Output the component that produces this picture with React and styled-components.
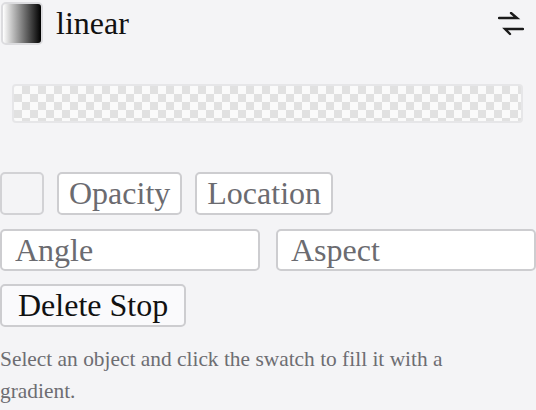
import React from 'react';
import styled, { createGlobalStyle } from 'styled-components';

const GlobalStyle = createGlobalStyle`
  html, body {
    margin: 0;
    padding: 0;
    background: #f4f4f6;
  }
  body {
    font-family: "Liberation Serif", "Times New Roman", serif;
  }
`;

const Panel = styled.div`
  width: 536px;
  padding-top: 2px;
  box-sizing: border-box;
`;

const Header = styled.div`
  display: flex;
  align-items: center;
  justify-content: space-between;
  padding: 0 12px 0 1px;
`;

const Title = styled.div`
  display: flex;
  align-items: center;
  gap: 13px;
  font-size: 32px;
  color: #111;
`;

const Swatch = styled.div`
  width: 42px;
  height: 43px;
  box-sizing: border-box;
  border: 2px solid #dcdcdf;
  border-radius: 5px;
  background: linear-gradient(to right, #fff, #000);
`;

const Preview = styled.div`
  margin: 39px 13px 0 12px;
  height: 39px;
  box-sizing: border-box;
  border: 2px solid #e6e6e8;
  border-radius: 4px;
  background-color: #fafafa;
  background-image: conic-gradient(#e1e1e1 25%, transparent 0 50%, #e1e1e1 0 75%, transparent 0);
  background-size: 16px 16px;
`;

const Row = styled.div`
  display: flex;
  gap: 13px;
  margin-top: ${(p) => p.$top}px;
`;

const Fields = styled.div`
  display: grid;
  grid-template-columns: 1fr 1fr;
  gap: 16px;
  margin-top: 14px;
`;

const StopColor = styled.div`
  width: 44px;
  height: 43px;
  box-sizing: border-box;
  border: 2px solid #d2d2d5;
  border-radius: 5px;
`;

const Button = styled.button`
  height: 43px;
  box-sizing: border-box;
  padding: 0 ${(p) => p.$pad || 10}px;
  border: 2px solid #cdcdd0;
  border-radius: 5px;
  background: ${(p) => (p.$dark ? '#fafafc' : '#fff')};
  font-family: "Liberation Serif", "Times New Roman", serif;
  font-size: 32px;
  color: ${(p) => (p.$dark ? '#111' : '#6b6b70')};
`;

const Field = styled.input`
  height: 42px;
  width: 100%;
  box-sizing: border-box;
  padding: 0 13px;
  border: 2px solid #cdcdd0;
  border-radius: 5px;
  background: #fff;
  font-family: "Liberation Serif", "Times New Roman", serif;
  font-size: 32px;
  color: #6b6b70;
  outline: none;

  &::placeholder {
    color: #6b6b70;
  }
`;

const Hint = styled.p`
  margin: 16px 0 0;
  max-width: 470px;
  font-size: 21.4px;
  line-height: 32px;
  color: #6d6d72;
`;

const SwapIcon = () => (
  <svg width="26" height="24" viewBox="0 0 26 24" fill="none" stroke="#1a1a1a" strokeWidth="2.4" strokeLinecap="round">
    <path d="M1 6h18l-6 -5" />
    <path d="M25 17H7l5 5" />
  </svg>
);

export default function App() {
  return (
    <>
      <GlobalStyle />
      <Panel>
        <Header>
          <Title>
            <Swatch />
            linear
          </Title>
          <SwapIcon />
        </Header>
        <Preview />
        <Row $top={49}>
          <StopColor />
          <Button>Opacity</Button>
          <Button>Location</Button>
        </Row>
        <Fields>
          <Field placeholder="Angle" />
          <Field placeholder="Aspect" />
        </Fields>
        <Row $top={13}>
          <Button $dark $pad={16}>Delete Stop</Button>
        </Row>
        <Hint>Select an object and click the swatch to fill it with a gradient.</Hint>
      </Panel>
    </>
  );
}
